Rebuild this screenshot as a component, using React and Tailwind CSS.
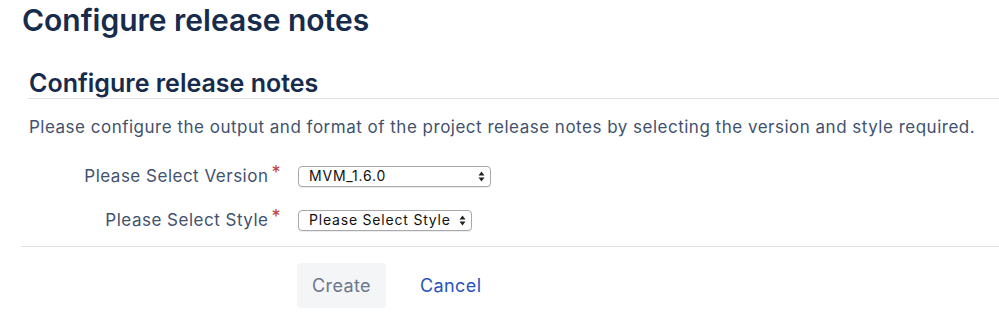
import React from 'react';

const Updown = () => (
  <svg width="7" height="11" viewBox="0 0 7 11" className="shrink-0">
    <path d="M3.5 0.5 L6.5 4.5 L0.5 4.5 Z" fill="#222" />
    <path d="M3.5 10.5 L6.5 6.5 L0.5 6.5 Z" fill="#222" />
  </svg>
);

const FakeSelect = ({ value, width }) => (
  <div
    className={`h-[21px] ${width} border border-[#a9a9a9] rounded-[4px] bg-white flex items-center justify-between pl-[10px] pr-[5px] text-[14px] tracking-[0.8px] text-[#111] shadow-[0_1px_1px_rgba(0,0,0,0.08)]`}
  >
    <span className="leading-none">{value}</span>
    <Updown />
  </div>
);

const Field = ({ label, children }) => (
  <div className="flex items-center">
    <div className="w-[281px] flex justify-end items-start text-[17px] tracking-[0.5px] leading-[22px] text-[#42526e]">
      <span>{label}</span>
      <span className="text-[#c1403a] text-[18px] ml-[3px] leading-[16px]">*</span>
    </div>
    <div className="ml-[17px]">{children}</div>
  </div>
);

export default function App() {
  return (
    <div className="w-[999px] h-[335px] bg-white overflow-hidden font-['Inter','Liberation_Sans',sans-serif]">
      <h1 className="pl-[22px] pt-[2px] text-[30px] leading-[36px] font-semibold text-[#172b4d]">
        Configure release notes
      </h1>

      <div className="pl-[28px] mt-[31px]">
        <h2 className="text-[25px] leading-[28px] font-semibold text-[#172b4d] pl-[1px] border-b border-[#dfe1e6] pb-[1px]">
          Configure release notes
        </h2>
        <p className="mt-[18px] text-[17px] tracking-[0.5px] leading-[20px] text-[#42526e] pl-[1px]">
          Please configure the output and format of the project release notes by selecting the version and style required.
        </p>
      </div>

      <div className="mt-[28px] flex flex-col gap-[22px]">
        <Field label="Please Select Version">
          <FakeSelect value="MVM_1.6.0" width="w-[193px]" />
        </Field>
        <Field label="Please Select Style">
          <FakeSelect value="Please Select Style" width="w-[174px]" />
        </Field>
      </div>

      <div className="ml-[21px] mt-[15px] border-t border-[#dfe1e6]" />

      <div className="pl-[297px] mt-[16px] flex items-center gap-[8px]">
        <button className="h-[45px] w-[89px] rounded-[4px] bg-[#f4f5f7] text-[18px] tracking-[0.4px] text-[#6b778c]">
          Create
        </button>
        <button className="h-[45px] px-[26px] text-[18px] tracking-[0.4px] text-[#2a52be]">Cancel</button>
      </div>
    </div>
  );
}
